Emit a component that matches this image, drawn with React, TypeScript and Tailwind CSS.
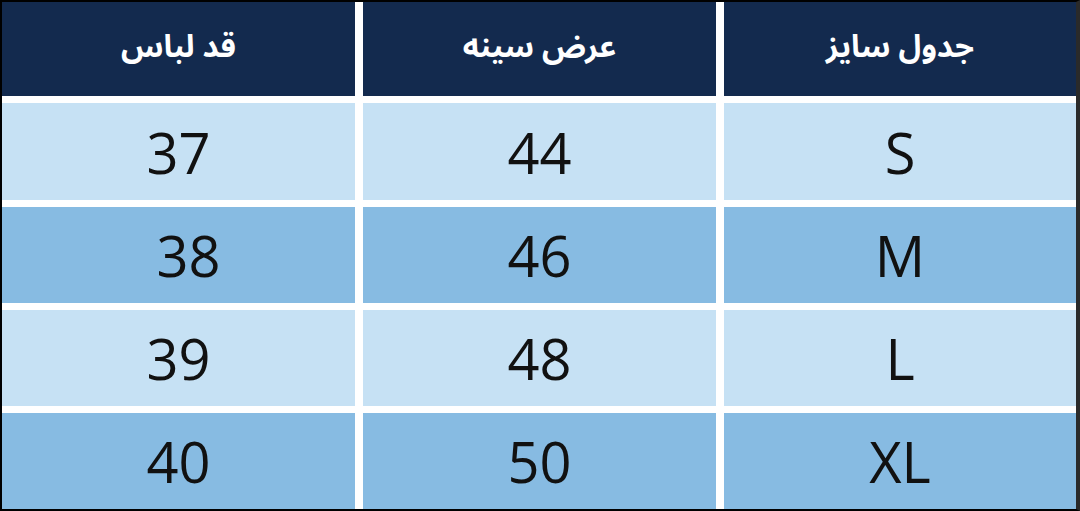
const header = ["جدول سایز", "عرض سینه", "قد لباس"]

const rows = [
  { size: "S", chest: "44", length: "37" },
  { size: "M", chest: "46", length: "38" },
  { size: "L", chest: "48", length: "39" },
  { size: "XL", chest: "50", length: "40" },
]

export default function App() {
  return (
    <div className="h-[511px] w-[1080px] bg-white">
      <div
        dir="rtl"
        className="grid h-full w-full grid-cols-[352px_353px_353px] grid-rows-[94px_97px_96px_96px_96px] gap-x-[8px] gap-y-[7px] border-t-2 border-b-2 border-l-2 border-r-4 border-t-black border-b-black border-l-black border-r-[#2a2a2a] bg-white"
      >
        {/* Header */}
        {header.map((h) => (
          <div
            key={h}
            className="flex items-center justify-center bg-[#132a4e] pb-1 text-[31px] font-bold text-white"
            style={{ fontFamily: '"Noto Sans Arabic", "DejaVu Sans", sans-serif' }}
          >
            {h}
          </div>
        ))}

        {/* Body rows */}
        {rows.map((r, i) => {
          const bg = i % 2 === 0 ? "bg-[#c6e1f4]" : "bg-[#87bbe2]"
          return [
            <div key={r.size + "s"} className={`flex items-center justify-center ${bg} font-['Open_Sans',sans-serif] text-[56px] text-[#111]`}>
              {r.size}
            </div>,
            <div key={r.size + "c"} className={`flex items-center justify-center ${bg} font-['Open_Sans',sans-serif] text-[56px] text-[#111]`}>
              {r.chest}
            </div>,
            <div
              key={r.size + "l"}
              className={`flex items-center justify-center ${bg} font-['Open_Sans',sans-serif] text-[56px] text-[#111] ${r.length === "38" ? "pl-5" : ""}`}
            >
              {r.length}
            </div>,
          ]
        })}
      </div>
    </div>
  )
}
